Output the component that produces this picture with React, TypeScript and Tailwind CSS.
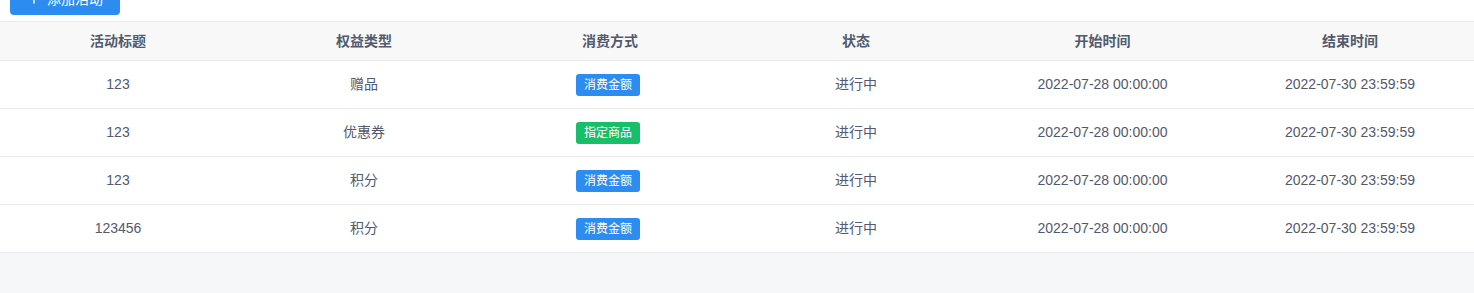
import { Plus } from 'lucide-react'

type Activity = {
  id: number
  title: string
  benefit: string
  mode: 'amount' | 'goods'
  status: string
  start: string
  end: string
}

const activities: Activity[] = [
  { id: 1, title: '123', benefit: '赠品', mode: 'amount', status: '进行中', start: '2022-07-28 00:00:00', end: '2022-07-30 23:59:59' },
  { id: 2, title: '123', benefit: '优惠券', mode: 'goods', status: '进行中', start: '2022-07-28 00:00:00', end: '2022-07-30 23:59:59' },
  { id: 3, title: '123', benefit: '积分', mode: 'amount', status: '进行中', start: '2022-07-28 00:00:00', end: '2022-07-30 23:59:59' },
  { id: 4, title: '123456', benefit: '积分', mode: 'amount', status: '进行中', start: '2022-07-28 00:00:00', end: '2022-07-30 23:59:59' },
]

const headers = ['活动标题', '权益类型', '消费方式', '状态', '开始时间', '结束时间']

const gridCols = 'grid grid-cols-[241px_246px_246px_246px_247px_1fr]'

function ModeTag({ mode }: { mode: Activity['mode'] }) {
  return (
    <span
      className={`inline-flex h-[22px] w-[64px] items-center justify-center rounded-[3px] text-[12px] text-white ${
        mode === 'amount' ? 'bg-[#2d8cf0]' : 'bg-[#19be6b]'
      }`}
    >
      {mode === 'amount' ? '消费金额' : '指定商品'}
    </span>
  )
}

export default function App() {
  return (
    <div className="h-[293px] overflow-hidden bg-[#f5f7f9] font-['Liberation_Sans','Noto_Sans_CJK_SC',sans-serif] text-[14px] text-[#515a6e]">
      <div className="bg-white pb-[6px] pl-[10px]">
        <button className="-mt-[17px] flex h-[32px] w-[110px] items-center justify-center gap-[6px] rounded-[4px] bg-[#2d8cf0] text-[14px] text-white">
          <Plus size={14} strokeWidth={2.5} />
          <span>添加活动</span>
        </button>
      </div>

      <div className="bg-white">
        <div className={`${gridCols} h-[40px] items-center border-y border-[#e8eaec] bg-[#f8f8f9] font-bold`}>
          {headers.map((h, i) => (
            <div key={h} className={`text-center ${i === 0 ? 'pr-[5px]' : ''}`}>
              {h}
            </div>
          ))}
        </div>

        {activities.map((a) => (
          <div key={a.id} className={`${gridCols} h-[48px] items-center border-b border-[#e8eaec]`}>
            <div className="pr-[5px] text-center">{a.title}</div>
            <div className="text-center">{a.benefit}</div>
            <div className="pr-[4px] text-center">
              <ModeTag mode={a.mode} />
            </div>
            <div className="text-center">{a.status}</div>
            <div className="text-center">{a.start}</div>
            <div className="text-center">{a.end}</div>
          </div>
        ))}
      </div>
    </div>
  )
}
